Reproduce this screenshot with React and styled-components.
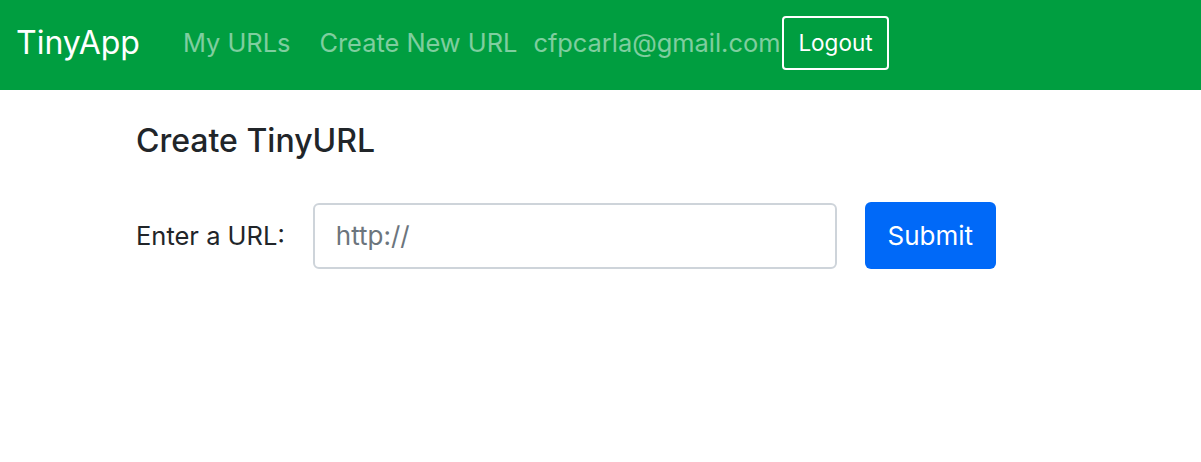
import React from 'react';
import styled, { createGlobalStyle } from 'styled-components';

const GlobalStyle = createGlobalStyle`
  body {
    margin: 0;
    background: #fff;
    font-family: Inter, "Liberation Sans", sans-serif;
    color: #212529;
  }
`;

const Navbar = styled.nav`
  height: 90px;
  background-color: #009e40;
  display: flex;
  align-items: center;
  padding: 0 16px;
  box-sizing: border-box;
`;

const Brand = styled.a`
  font-size: 32px;
  color: #fff;
  text-decoration: none;
  margin: 0 43px 5px 0;
`;

const NavLink = styled.a`
  font-size: 25.4px;
  color: rgba(255, 255, 255, 0.5);
  text-decoration: none;
  margin: 0 ${props => props.gap || 0}px 5px 0;
`;

const LogoutButton = styled.button`
  height: 54px;
  padding: 0 14px 2px;
  background: transparent;
  border: 2px solid #fff;
  border-radius: 4px;
  color: #fff;
  font-family: inherit;
  font-size: 22.5px;
  margin-top: -4px;
`;

const Main = styled.main`
  padding: 32px 136px 0;
`;

const Title = styled.h2`
  margin: 0 0 42px;
  font-size: 32px;
  font-weight: 500;
  line-height: 38px;
`;

const Form = styled.form`
  display: flex;
  align-items: center;
`;

const Label = styled.label`
  font-size: 25.5px;
  margin-right: 28px;
`;

const Input = styled.input`
  width: 524px;
  height: 66px;
  box-sizing: border-box;
  border: 2px solid #ced4da;
  border-radius: 6px;
  padding: 0 21px;
  font-family: inherit;
  font-size: 26px;
  color: #495057;
  margin-right: 28px;
  &::placeholder {
    color: #6c757d;
  }
`;

const SubmitButton = styled.button`
  width: 131px;
  height: 67px;
  border: none;
  border-radius: 6px;
  background: #0069f8;
  color: #fff;
  font-family: inherit;
  font-size: 26px;
`;

export default function App() {
  return (
    <>
      <GlobalStyle />
      <Navbar>
        <Brand href="#">TinyApp</Brand>
        <NavLink href="#" gap={29}>My URLs</NavLink>
        <NavLink href="#" gap={16}>Create New URL</NavLink>
        <NavLink as="span" gap={2}>cfpcarla@gmail.com</NavLink>
        <LogoutButton>Logout</LogoutButton>
      </Navbar>
      <Main>
        <Title>Create TinyURL</Title>
        <Form onSubmit={e => e.preventDefault()}>
          <Label>Enter a URL:</Label>
          <Input type="text" placeholder="http://" />
          <SubmitButton type="submit">Submit</SubmitButton>
        </Form>
      </Main>
    </>
  );
}
